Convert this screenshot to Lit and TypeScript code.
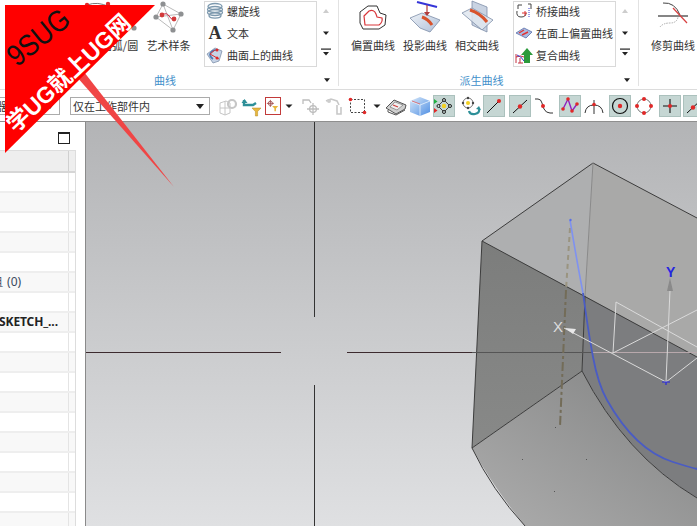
import { LitElement, html, css, svg } from "lit";
import { customElement } from "lit/decorators.js";

const d = (x: number, y: number, r = 1.8, f = "#e02828") => svg`<circle cx=${x} cy=${y} r=${r} fill=${f}/>`;
const T = (c: unknown) => html`<svg class="ti" viewBox="0 0 22 22">${c}</svg>`;
const B = (c: unknown) => html`<svg class="bi" viewBox="0 0 40 32">${c}</svg>`;
const L = (c: unknown) => html`<svg class="li" viewBox="0 0 18 18">${c}</svg>`;
const tri = (x = 8, y = 2, w = 6, h = 3.5, f = "#222") => svg`<path d="M${x - w / 2} ${y}h${w}l${-w / 2} ${h}z" fill=${f}/>`;

const funnel = svg`<path d="M11 13h9l-3.4 3.6V21h-2.2v-4.4z" fill="#e8b73e" stroke="#b58a20" stroke-width=".5"/>`;

const tools = [
  { i: T(svg`<g fill="none" stroke="#c6c6c6" stroke-width="1"><path d="M3 8l6-2 4 2v10l-5 2-5-2zM3 13h10M8 6v14"/><circle cx="15" cy="9" r="4" stroke-width="2.2"/></g>`) },
  { i: T(svg`<path d="M3 5v5h9l3-2" fill="none" stroke="#2d8f98" stroke-width="2.4"/><path d="M0.5 8l3-4 3 4z" fill="#2d8f98"/>${funnel}`) },
  { w: "red", i: html`<svg class="ri" viewBox="0 0 16 18"><g fill="none" stroke="#a05050" stroke-width="1"><circle cx="5" cy="6" r="2.4"/><path d="M5 2v8M1 6h8"/></g><path d="M7 9h7l-2.6 2.8V15H9.6v-3.2z" fill="#e8b73e"/></svg>` },
  { w: "arrow", i: html`<svg class="ai" viewBox="0 0 12 22">${tri(6, 9.5, 7, 3.5)}</svg>` },
  { sp: true, i: T(svg`<g fill="none" stroke="#bdbdbd" stroke-width="1.3"><path d="M4 9V5h6l2 3"/><circle cx="14" cy="14" r="3.4"/><path d="M14 8v12M8 14h12"/></g>`) },
  { i: T(svg`<g fill="none" stroke="#c8c8c8" stroke-width="1.6"><path d="M3 6l5-2 6 2 2 4M14 10v9h4v-7"/></g><circle cx="6" cy="6" r="2" fill="#cdcdcd"/>`) },
  { i: T(svg`<rect x="3.5" y="4.5" width="14" height="13" fill="none" stroke="#444" stroke-dasharray="2 1.5"/>${d(3.5, 4.5)}${d(17.5, 17.5)}`) },
  { w: "arrow", i: html`<svg class="ai" viewBox="0 0 12 22">${tri(6, 9.5, 7, 3.5)}</svg>` },
  { i: T(svg`<path d="M1 13l8-8 12 5-1 4-9 5z" fill="#cfcfcf" stroke="#555"/><path d="M5 12l5-5 8 3-6 5z" fill="#f0f0f0" stroke="#666" stroke-width=".6"/><path d="M8 10l5 2" stroke="#d04040" stroke-width="1.2"/><path d="M3 15v2l8 3 9-5" fill="none" stroke="#555"/>`) },
  { i: T(svg`<defs><linearGradient id="bc" x1="0" y1="0" x2="1" y2="1"><stop offset="0" stop-color="#d8e8f8"/><stop offset="1" stop-color="#4f8fe4"/></linearGradient></defs><path d="M1 6l10-4 10 4v11l-10 4-10-4z" fill="url(#bc)"/><path d="M1 6l10 4 10-4M11 10v11" fill="none" stroke="#e8f2fc" stroke-width=".8"/><path d="M3 6l8 3" stroke="#e06060" stroke-width=".8"/>`) },
  { on: true, i: T(svg`<path d="M11 5l6 6-6 6-6-6z" fill="none" stroke="#333" stroke-width=".9"/><circle cx="11" cy="11" r="2.2" fill="#f2d020"/><g fill="#c5d6d3" stroke="#222" stroke-width="1"><circle cx="11" cy="5" r="1.5"/><circle cx="17" cy="11" r="1.5"/><circle cx="11" cy="17" r="1.5"/><circle cx="5.5" cy="11" r="1.5"/></g><path d="M1 4l3.5 2.5-3.5 2.5z" fill="#20b040"/><path d="M1 13l3.5 2.5-3.5 2.5z" fill="#e02828"/>`) },
  { sp: true, i: T(svg`<g fill="none" stroke="#666" stroke-width=".9"><circle cx="9" cy="8" r="5"/></g><g fill="#444"><circle cx="9" cy="3" r="1.2"/><circle cx="4" cy="8" r="1.2"/><circle cx="14" cy="8" r="1.2"/><circle cx="9" cy="13" r="1.2"/></g><circle cx="9" cy="8" r="2" fill="#f2d020"/><path d="M10 16q1 4 6 3t4-5" fill="none" stroke="#2d8f98" stroke-width="2.2"/><path d="M17 14l3-3 2 4z" fill="#2d8f98"/>`) },
  { on: true, i: T(svg`<path d="M4 18L16 6" stroke="#111" stroke-width="1"/>${d(16, 6, 2)}`) },
  { sp: true, on: true, i: T(svg`<path d="M4 18L18 5" stroke="#111" stroke-width="1"/>${d(11, 11.5, 2.2)}`) },
  { i: T(svg`<path d="M2 4h3q3 0 4 4t2 6q2 4 6 4h3" fill="none" stroke="#333" stroke-width="1"/>${d(10, 11, 2)}`) },
  { sp: true, on: true, i: T(svg`<path d="M4 14L9 4l4 12 5-7" fill="none" stroke="#9020c0" stroke-width="1.4"/>${d(4, 14)}${d(9, 4)}${d(13, 16)}${d(18, 9)}`) },
  { i: T(svg`<path d="M2 18Q3 10 11 10t9 8" fill="none" stroke="#333" stroke-width="1"/><path d="M11 5v14" stroke="#333" stroke-width="1"/>${d(11, 9.5, 1.8)}`) },
  { sp: true, on: true, i: T(svg`<circle cx="11" cy="11" r="7.5" fill="none" stroke="#111" stroke-width="1.2"/>${d(11, 11, 2.2)}`) },
  { i: T(svg`<circle cx="11" cy="11" r="7" fill="none" stroke="#777" stroke-width="1"/>${d(11, 4, 2)}${d(18, 11, 2)}${d(11, 18, 2)}${d(4, 11, 2)}`) },
  { sp: true, on: true, i: T(svg`<path d="M11 4v14M4 11h14" stroke="#111" stroke-width="1.1"/>${d(11, 11, 2)}`) },
  { on: true, i: T(svg`<path d="M4 18L18 5" stroke="#111" stroke-width="1"/>${d(10, 12.5, 2.2)}`) },
];

const rows = Array.from({ length: 18 }, (_, i) => i);

@customElement("app-root")
export class AppRoot extends LitElement {
  static styles = css`
    :host { display: block; width: 697px; height: 526px; }
    .page { position: relative; width: 697px; height: 526px; overflow: hidden; background: #fff; display: flex; flex-direction: column;
      font-family: "Noto Sans CJK SC", "Noto Sans", sans-serif; color: #333; font-size: 11px; }
    .ribbon { height: 90px; box-sizing: border-box; border-bottom: 1px solid #dcdcdc; display: flex; flex: none; }
    .group { display: flex; flex-direction: column; box-sizing: border-box; height: 86px; border-right: 1px solid #e2e2e2; flex: none; }
    .g1 { width: 339px; }
    .g2 { width: 300px; }
    .g3 { flex: 1; border-right: 0; }
    .top { display: flex; height: 73px; flex: none; }
    .g1 .top { padding-left: 95px; }
    .g2 .top { padding-left: 8px; }
    .g3 .top { padding-left: 8px; }
    .big { flex: none; width: 52px; display: flex; flex-direction: column; align-items: center; white-space: nowrap; line-height: 14px; }
    .g1 .big { width: 49px; }
    .bi { width: 40px; height: 32px; flex: none; overflow: visible; margin-bottom: 6px; }
    .list { flex: none; box-sizing: border-box; height: 66px; margin-top: 1px; border: 1px solid #d9d9d9; padding-bottom: 2px; display: flex; flex-direction: column; justify-content: center; }
    .g1 .list { width: 113px; margin-left: 11px; }
    .g2 .list { width: 103px; margin-left: 10px; }
    .row { flex: none; height: 22px; display: flex; align-items: center; gap: 3px; padding-left: 1px; white-space: nowrap; }
    .li { width: 18px; height: 18px; flex: none; }
    .glyph { width: 18px; flex: none; text-align: center; font: bold 18px "Liberation Serif", serif; color: #333; }
    .scroll { flex: none; width: 16px; margin-left: 1px; display: flex; flex-direction: column; }
    .scroll svg { width: 16px; height: 22px; display: block; }
    .foot { display: flex; align-items: center; height: 14px; }
    .cap { flex: 1; text-align: center; color: #3f8fca; line-height: 14px; }
    .g1 .cap { padding-left: 6px; }
    .launch { width: 6px; height: 4px; margin-right: 8px; flex: none; }

    .tools { height: 31px; flex: none; display: flex; align-items: flex-start; padding-top: 5px; box-sizing: border-box; gap: 2px; }
    .combo { flex: none; box-sizing: border-box; height: 18px; margin-top: 2px; border: 1px solid #ababab; display: flex; align-items: center; justify-content: space-between; padding: 0 5px 0 2px; color: #333; line-height: 16px; white-space: nowrap; }
    .c1 { width: 133px; margin-left: -73px; }
    .c2 { width: 140px; margin-left: 8px; margin-right: 5px; }
    .combo svg { width: 8px; height: 5px; flex: none; }
    .cell { flex: none; width: 22px; height: 22px; box-sizing: border-box; display: flex; align-items: center; justify-content: center; }
    .cell.sp { margin-left: 2px; }
    .cell.on { background: #c5d6d3; box-shadow: inset 0 0 0 1px #abc1bd; }
    .cell.red { width: 16px; height: 18px; margin-top: 2px; border: 1px solid #c23a3a; }
    .cell.arrow { width: 12px; }
    .ti { width: 22px; height: 22px; display: block; flex: none; }
    .ri { width: 14px; height: 16px; display: block; flex: none; }
    .ai { width: 12px; height: 22px; display: block; flex: none; }

    .main { flex: 1; min-height: 0; display: flex; border-top: 1px solid #8f8f8f; }
    .side { width: 86px; flex: none; box-sizing: border-box; border-right: 1px solid #8a8a8a; background: #fff; display: flex; flex-direction: column; }
    .head { height: 28px; flex: none; display: flex; justify-content: flex-end; align-items: flex-start; padding: 10px 15px 0 0; box-sizing: border-box; }
    .max { width: 12px; height: 12px; box-sizing: border-box; border: 1px solid #222; border-top-width: 2px; }
    .table { width: 76px; flex: 1; box-sizing: border-box; border-top: 1px solid #ddd; border-right: 1px solid #ddd; overflow: hidden; }
    .th { height: 22px; box-sizing: border-box; background: #eee; border-bottom: 2px solid #d6d6d6; display: flex; }
    .tr { height: 20px; box-sizing: border-box; border-bottom: 2px solid #eee; display: flex; align-items: center; font: 12px/18px "Noto Sans", sans-serif; color: #333; white-space: nowrap; }
    .tr.alt { background: #f8f8f8; }
    .td { width: 68px; height: 100%; box-sizing: border-box; border-right: 0; flex: none; overflow: hidden; display: flex; align-items: center; }
    .th .td { height: 20px; }
    .div { width: 1px; height: 100%; background: #e4e4e4; flex: none; }
    .th .div { background: #d0d0d0; }
    .count { margin-left: -9px; word-spacing: 1px; color: #3a4a60; }
    .bold { font-weight: 700; margin-left: -1px; color: #222; letter-spacing: -0.1px; }
    .view { flex: 1; min-width: 0; display: block; background: linear-gradient(#b3b4b6, #dfe0e2); }
    .view svg { display: block; width: 100%; height: 100%; }
    .over { position: absolute; left: 0; top: 0; width: 697px; height: 526px; pointer-events: none; }
    .t9 { font: 30px "Liberation Sans", sans-serif; fill: #111; }
    .tx { font: bold 23px "Liberation Sans", "Noto Sans CJK SC", sans-serif; fill: #fff; }
    .wl { font: 15px "Liberation Sans", sans-serif; }
    .wy { font: bold 14px "Liberation Sans", sans-serif; }
  `;

  private big(label: string, icon: unknown) {
    return html`<div class="big">${icon}<span>${label}</span></div>`;
  }
  private scroll() {
    return html`<div class="scroll">
      <svg viewBox="0 0 16 22"><path d="M5 13h6l-3-4z" fill="#cdcdcd"/></svg>
      <svg viewBox="0 0 16 22">${tri(8, 9.5, 6, 3.5)}</svg>
      <svg viewBox="0 0 16 22"><path d="M3 4.5h10v1.2H3z" fill="#222"/>${tri(8, 8, 6, 3.5)}</svg>
    </div>`;
  }
  private foot(t: string) {
    return html`<div class="foot"><span class="cap">${t}</span><svg class="launch" viewBox="0 0 8 5"><path d="M0 0h8L4 5z" fill="#222"/></svg></div>`;
  }

  render() {
    return html`<div class="page">
      <div class="ribbon">
        <div class="group g1">
          <div class="top">
            ${this.big("圆弧/圆", B(svg`<path d="M-13 5Q8-3 34 28" fill="none" stroke="#777" stroke-width="1"/>${d(-13, 5, 2.2)}${d(8, 4, 2.2)}${d(34, 28, 2.6, "#8e8e8e")}`))}
            ${this.big("艺术样条", B(svg`<path d="M14 4L7 17l17 13 8-16zM14 4l10 26M7 17l25-3" fill="none" stroke="#a8a8a8" stroke-width=".8"/><path d="M13 15q5-3 7 1t5 3" fill="none" stroke="#c24" stroke-width="1"/>${d(14, 4, 2.6, "#8e9092")}${d(32, 14, 2.6, "#8e9092")}${d(7, 17, 2.6, "#8e9092")}${d(24, 30, 2.6, "#8e9092")}${d(13, 15, 2.4, "#d23a3a")}${d(25, 19, 2.4, "#d23a3a")}`))}
            <div class="list">
              <div class="row">${L(svg`<g fill="none" stroke="#7d99ae" stroke-width="1.3"><ellipse cx="9" cy="4.5" rx="7" ry="3"/><ellipse cx="9" cy="7.5" rx="7.5" ry="3"/><ellipse cx="9" cy="10.5" rx="7.5" ry="3"/><ellipse cx="9" cy="13.5" rx="6" ry="2.6"/></g>`)}螺旋线</div>
              <div class="row"><span class="glyph">A</span>文本</div>
              <div class="row">${L(svg`<path d="M1 8l8-6 7 3-3 10-6 2z" fill="#c6d3e6" stroke="#7f90ab" stroke-width=".8"/><path d="M4 8q2-4 6-4M7 13q-3-2-3-5" fill="none" stroke="#4a78b4" stroke-width="1.6"/><path d="M4 8l5-4M4 8l9 5" fill="none" stroke="#d33" stroke-width="1"/>${d(11, 4, 1.5)}${d(11, 12, 1.5)}`)}曲面上的曲线</div>
            </div>
            ${this.scroll()}
          </div>
          ${this.foot("曲线")}
        </div>
        <div class="group g2">
          <div class="top">
            ${this.big("偏置曲线", B(svg`<path d="M7 12l8-6h9l3 7 6 2-1 10-6 4H10l-3-6z" fill="#fff" stroke="#333" stroke-width="1"/><path d="M11 16l5-5q5-2 7 3l1 3 5 1q1 4-3 7H12z" fill="none" stroke="#d8363a" stroke-width="1.2"/>`))}
            ${this.big("投影曲线", B(svg`<defs><linearGradient id="sf" x1="0" y1="0" x2="1" y2="1"><stop offset="0" stop-color="#eef2f7"/><stop offset="1" stop-color="#aebfd8"/></linearGradient></defs><path d="M5 18l12-5 18 7-10 12-10-4z" fill="url(#sf)" stroke="#7d8ea8" stroke-width=".8"/><path d="M12 2l20 5" stroke="#3535d8" stroke-width="2"/><path d="M22 5v8" stroke="#b03a3a" stroke-width="1.2"/><path d="M19 12h6l-3 4z" fill="#b03a3a"/><path d="M17 17q6 2 10 8" fill="none" stroke="#d8532c" stroke-width="3"/>`))}
            ${this.big("相交曲线", B(svg`<path d="M15 1l15 6v25l-15-7z" fill="#c9d3e2" stroke="#7d8ea8" stroke-width=".8"/><path d="M5 13l10-5 21 12-11 10z" fill="#dfe6ef" stroke="#7d8ea8" stroke-width=".8" fill-opacity=".85"/><path d="M13 10q10 3 17 12" fill="none" stroke="#d8532c" stroke-width="3"/>`))}
            <div class="list">
              <div class="row">${L(svg`<path d="M3 7V3h4M13 2h3v5M2 9q-1 6 4 6t5-4" fill="none" stroke="#444" stroke-width="1"/><path d="M14 6v9" stroke="#3a3ad0" stroke-dasharray="1 1"/><path d="M7 11h5M10 9v5" stroke="#d33"/>`)}桥接曲线</div>
              <div class="row">${L(svg`<path d="M1 9l8-5 8 4-6 6z" fill="#a8bbe2" stroke="#5a6fa8" stroke-width=".8"/><path d="M4 9l5-3M7 11l6-3" stroke="#e03535" stroke-width="1.4"/>`)}在面上偏置曲线</div>
              <div class="row">${L(svg`<path d="M9 17V9H6l6-7 6 7h-3v8z" fill="#2c9a3c"/><path d="M1 8v9M1 11q5-2 8 0M3 17h5M5 12v5" fill="none" stroke="#c43040"/><path d="M2 9q4 1 7 6" fill="none" stroke="#3a3ad0"/>`)}复合曲线</div>
            </div>
            ${this.scroll()}
          </div>
          ${this.foot("派生曲线")}
        </div>
        <div class="group g3">
          <div class="top">
            ${this.big("修剪曲线", B(svg`<path d="M5 16h30" stroke="#222" stroke-width="1.1"/><path d="M10 3q12-1 17 12" fill="none" stroke="#444" stroke-width="1"/><path d="M20 8l14 15" stroke="#d84040" stroke-width="1.2"/><path d="M7 27q3-4 10-4t8-6" fill="none" stroke="#aaa" stroke-width="1" stroke-dasharray="1.5 1"/>`))}
          </div>
        </div>
      </div>

      <div class="tools">
        <div class="combo c1"><span>没有选择过滤器</span><svg viewBox="0 0 10 6"><path d="M0 0h10L5 6z" fill="#222"/></svg></div>
        <div class="combo c2"><span>仅在工作部件内</span><svg viewBox="0 0 10 6"><path d="M0 0h10L5 6z" fill="#222"/></svg></div>
        ${tools.map((t: any) => html`<div class="cell ${t.on ? "on" : ""} ${t.sp ? "sp" : ""} ${t.w ?? ""}">${t.i}</div>`)}
      </div>

      <div class="main">
        <div class="side">
          <div class="head"><div class="max"></div></div>
          <div class="table">
            <div class="th"><div class="td"></div><div class="div"></div></div>
            ${rows.map((i) => html`<div class="tr ${i % 2 === 1 ? "alt" : ""}">
              <div class="td">${i === 5 ? html`<span class="count">组 (0)</span>` : i === 7 ? html`<span class="bold">SKETCH_...</span>` : ""}</div>
              <div class="div"></div>
            </div>`)}
          </div>
        </div>
        <div class="view">
          <svg viewBox="86 122 611 404" preserveAspectRatio="none">
            <defs>
              <linearGradient id="fl" x1="1" y1="0" x2="0" y2="1"><stop offset="0" stop-color="#828383"/><stop offset="1" stop-color="#adadad"/></linearGradient>
              <linearGradient id="lf" x1="0" y1="0" x2="0" y2="1"><stop offset="0" stop-color="#7c7d7c"/><stop offset="1" stop-color="#888988"/></linearGradient>
            </defs>
            <path d="M314.5 122V317M314.5 385V526" stroke="#333" stroke-width="1"/>
            <path d="M86 352.5H281M347 352.5H472" stroke="#3c2a2e" stroke-width="1"/>
            <path d="M482 241L593 163 585 296z" fill="#aeafb0"/>
            <path d="M593 163L697 218V357L585 296z" fill="#a9a9a8"/>
            <path d="M482 241L585 296 582 371 472 448z" fill="url(#lf)"/>
            <path d="M585 296L697 357V498Q625 455 582 371z" fill="#7c7d7f"/>
            <path d="M472 448L582 371Q625 455 697 498V526H525Q492 485 472 448z" fill="url(#fl)"/>
            <g fill="none" stroke="#3c3c3c" stroke-width="1">
              <path d="M472 448L482 241 593 163 697 218"/>
              <path d="M482 241L697 357"/>
              <path d="M472 448L582 371Q625 455 697 498"/>
              <path d="M472 448Q492 490 525 526"/>
            </g>
            <path d="M593 163L585 296" stroke="#8a8a8a" stroke-width="1"/>
            <path d="M585 296L582 371" stroke="#3c3c3c" stroke-width="1"/>
            <path d="M472 352.5H593" stroke="#555" stroke-width="1"/>
            <path d="M593 352.5H697" stroke="#b8a8ac" stroke-width="1"/>
            <path d="M570 228L566 290" stroke="#9a9480" stroke-width="2" stroke-dasharray="5 4"/>
            <path d="M566 290L560 427" stroke="#736c58" stroke-width="2" stroke-dasharray="9 3 3 3"/>
            <path d="M570 220Q577 262 583 293" fill="none" stroke="#7f92f0" stroke-width="1.6"/>
            <path d="M583 293Q588 330 593 357T607 400Q635 450 673 462T697 467" fill="none" stroke="#4a5cc4" stroke-width="1.8"/>
            <circle cx="570.5" cy="220" r="1.2" fill="#5a70e8"/>
            <g fill="#555"><rect x="522" y="459" width="1" height="1"/><rect x="586" y="459" width="1" height="1"/><rect x="554" y="491" width="1" height="1"/><rect x="555" y="427" width="1" height="1"/></g>
            <g fill="none" stroke="#dadada" stroke-width="1">
              <path d="M564 328L666 382 697 358"/>
              <path d="M616 302L613 353"/>
              <path d="M616 302L697 347"/>
              <path d="M613 353L697 310"/>
              <path d="M666 382L670 290"/>
            </g>
            <path d="M565 328l11 1-3 5z" fill="#e8e8e8"/>
            <path d="M670 278l-3 13h6z" fill="#8a8a8a"/>
            <text class="wl" x="553" y="332" fill="#dcdcdc">X</text>
            <text class="wy" x="666" y="277" fill="#2525e0">Y</text>
            <path d="M662 382h8M666 382v3" stroke="#2525e0" stroke-width="1.2"/>
          </svg>
        </div>
      </div>

      <svg class="over" viewBox="0 0 697 526">
        <path d="M76 76L84 72 174 187z" fill="#f04545"/>
        <path d="M5 5H155L5 153z" fill="#ff0000"/>
        <text class="t9" transform="translate(17 67.5) rotate(-39)" textLength="71" lengthAdjust="spacingAndGlyphs">9SUG</text>
        <text class="tx" transform="translate(15.5 133.5) rotate(-43)" textLength="160" lengthAdjust="spacingAndGlyphs">学UG就上UG网</text>
      </svg>
    </div>`;
  }
}
